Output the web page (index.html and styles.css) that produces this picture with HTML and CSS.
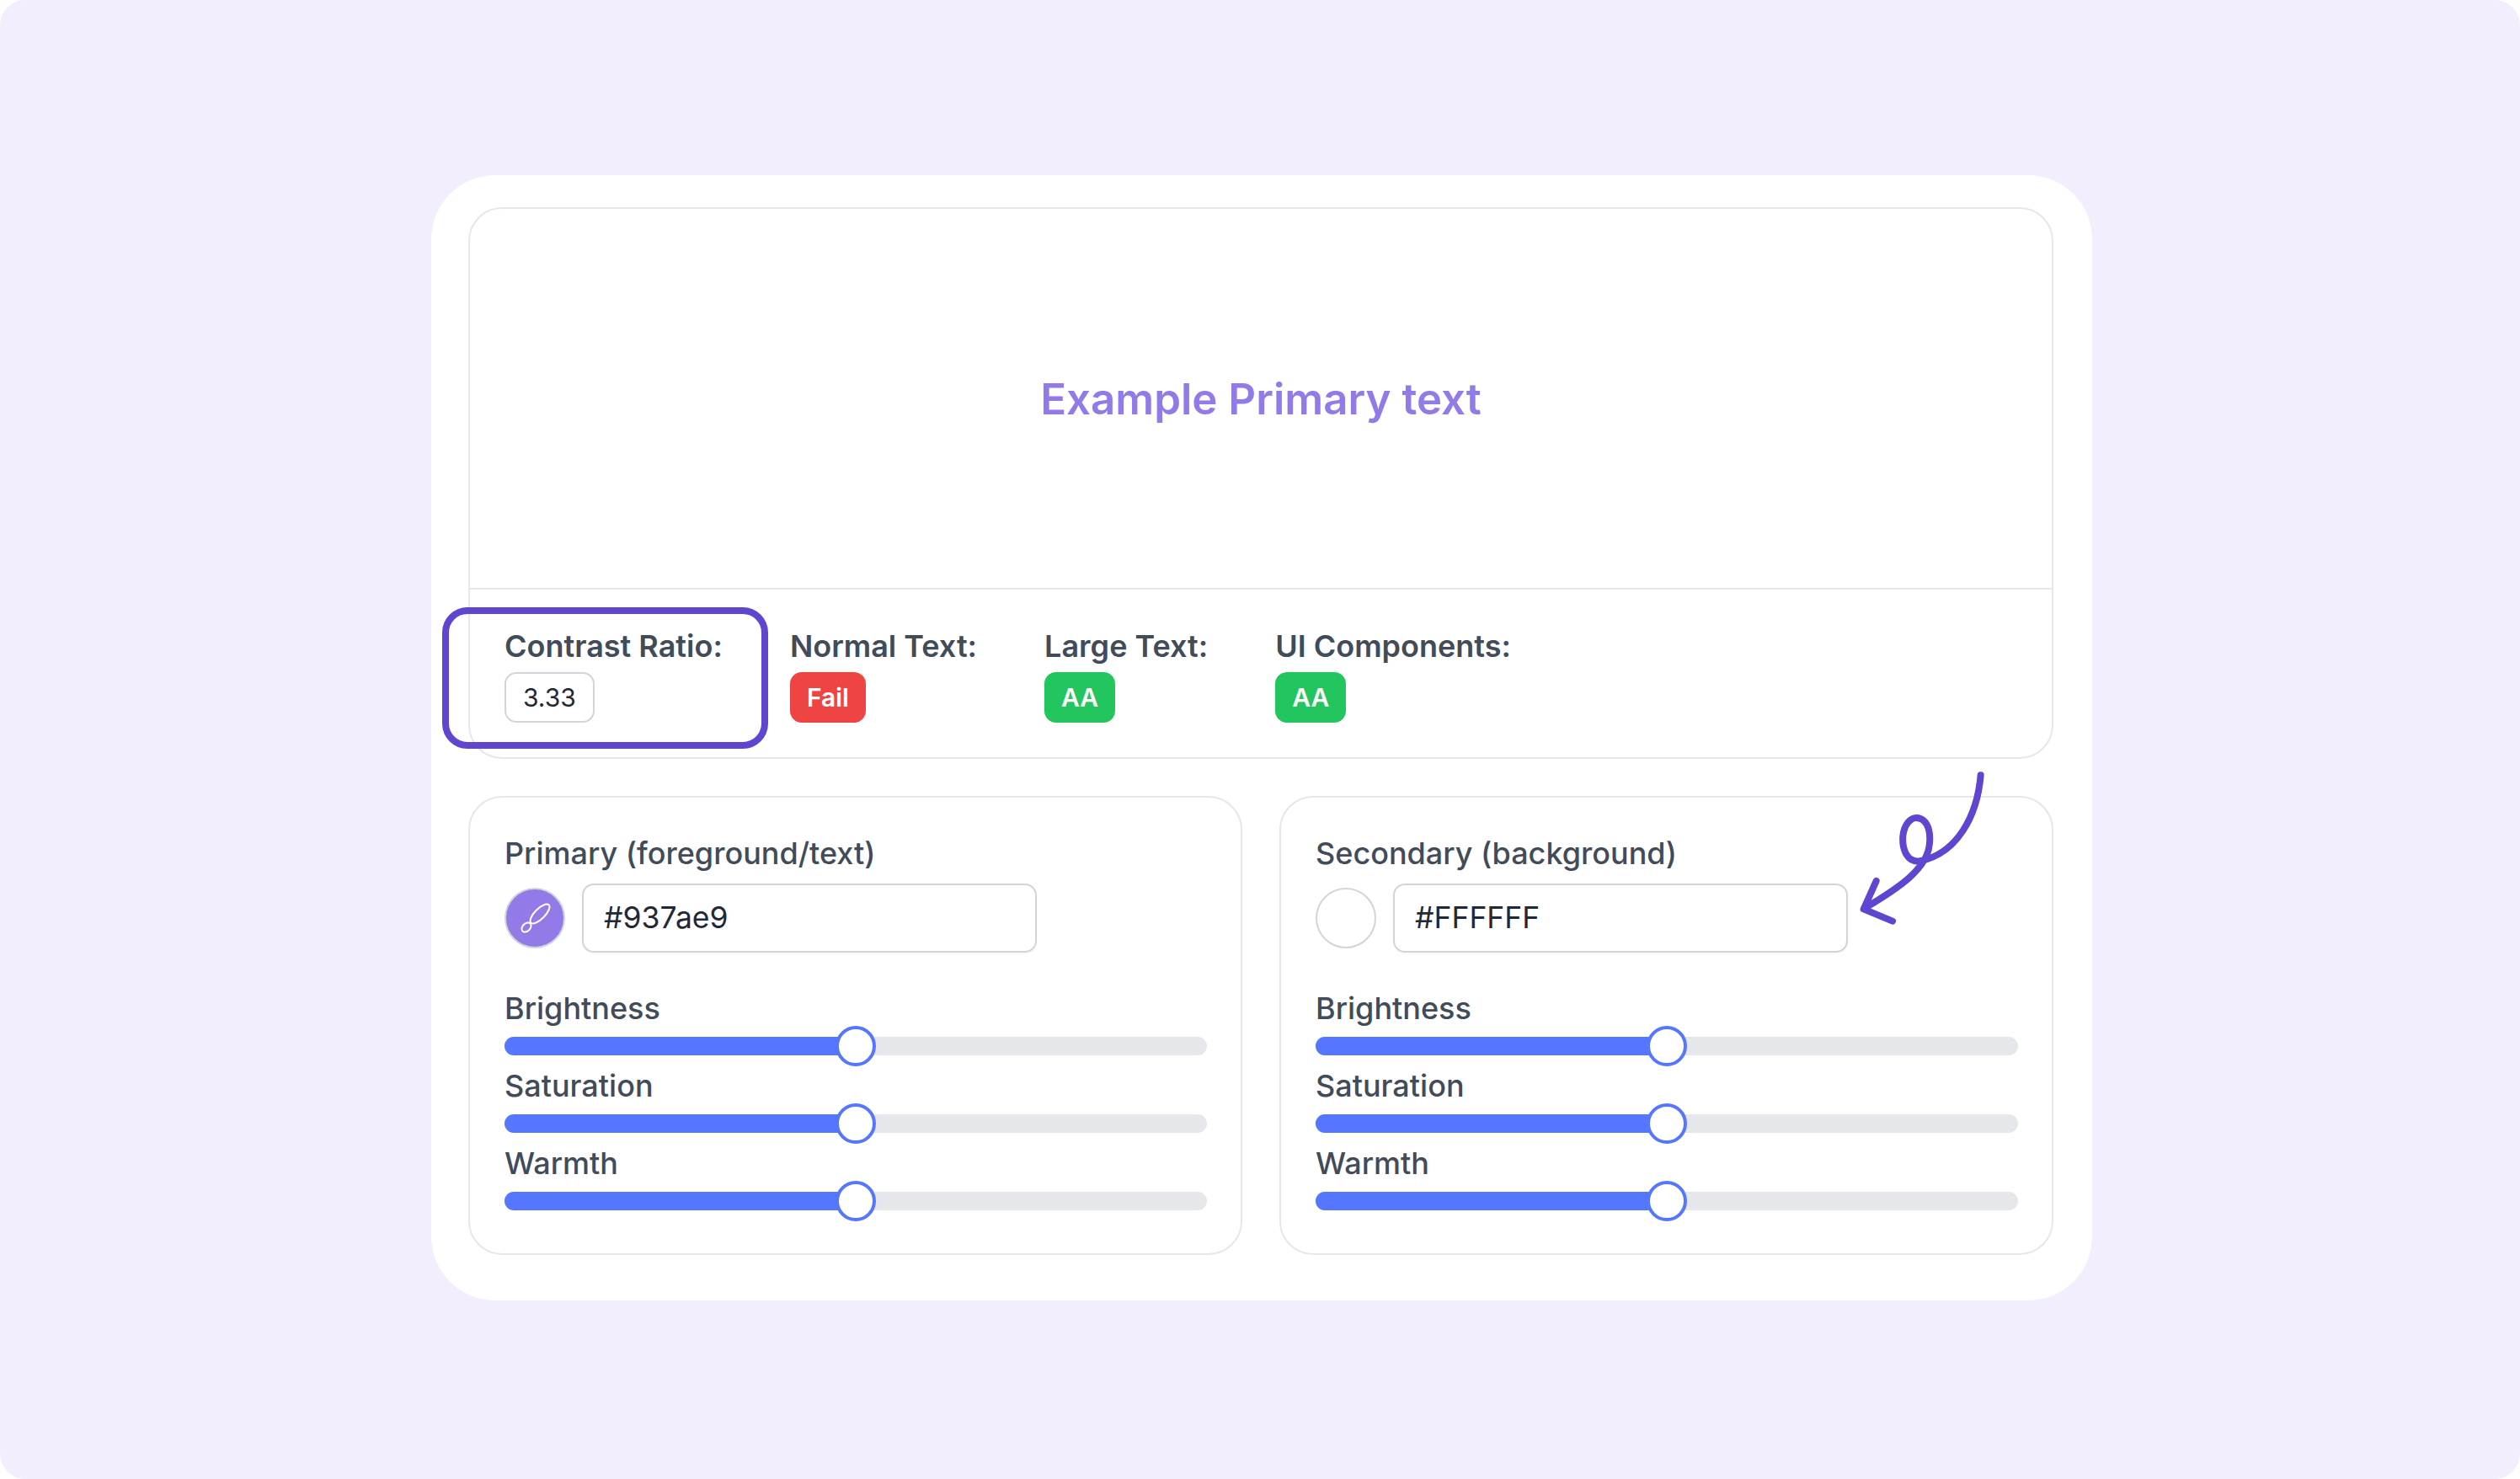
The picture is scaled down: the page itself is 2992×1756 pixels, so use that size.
FILE: index.html
```html
<!DOCTYPE html>
<html lang="en">
<head>
  <meta charset="UTF-8" />
  <title>Color Contrast Checker</title>
  <link rel="stylesheet" href="styles.css">
</head>
<body>

  <div class="card">
    <!-- Preview + results -->
    <section class="preview-box">
      <div class="preview">Example Primary text</div>
      <div class="stats">
        <div class="stat">
          <span class="stat-label">Contrast Ratio:</span>
          <span class="pill pill-ratio">3.33</span>
        </div>
        <div class="stat">
          <span class="stat-label">Normal Text:</span>
          <span class="pill pill-fail">Fail</span>
        </div>
        <div class="stat">
          <span class="stat-label">Large Text:</span>
          <span class="pill pill-pass">AA</span>
        </div>
        <div class="stat">
          <span class="stat-label">UI Components:</span>
          <span class="pill pill-pass">AA</span>
        </div>
      </div>
    </section>

    <!-- Color controls -->
    <section class="panels">
      <div class="panel">
        <div class="panel-title">Primary (foreground/text)</div>
        <div class="color-row">
          <span class="swatch swatch-primary">
            <svg class="brush" viewBox="0 0 40 40" fill="none" stroke="#fff" stroke-width="2">
              <ellipse cx="26" cy="15" rx="15" ry="6" transform="rotate(-45 26 15)"/>
              <ellipse cx="10" cy="31" rx="6.5" ry="4.5" transform="rotate(-45 10 31)"/>
            </svg>
          </span>
          <div class="hex-input">#937ae9</div>
        </div>
        <div class="sliders">
          <div class="slider-group">
            <div class="slider-label">Brightness</div>
            <div class="track"><div class="fill" style="width: 50%"><span class="thumb"></span></div></div>
          </div>
          <div class="slider-group">
            <div class="slider-label">Saturation</div>
            <div class="track"><div class="fill" style="width: 50%"><span class="thumb"></span></div></div>
          </div>
          <div class="slider-group">
            <div class="slider-label">Warmth</div>
            <div class="track"><div class="fill" style="width: 50%"><span class="thumb"></span></div></div>
          </div>
        </div>
      </div>

      <div class="panel">
        <div class="panel-title">Secondary (background)</div>
        <div class="color-row">
          <span class="swatch"></span>
          <div class="hex-input">#FFFFFF</div>
        </div>
        <div class="sliders">
          <div class="slider-group">
            <div class="slider-label">Brightness</div>
            <div class="track"><div class="fill" style="width: 50%"><span class="thumb"></span></div></div>
          </div>
          <div class="slider-group">
            <div class="slider-label">Saturation</div>
            <div class="track"><div class="fill" style="width: 50%"><span class="thumb"></span></div></div>
          </div>
          <div class="slider-group">
            <div class="slider-label">Warmth</div>
            <div class="track"><div class="fill" style="width: 50%"><span class="thumb"></span></div></div>
          </div>
        </div>
      </div>
    </section>

    <!-- Annotations drawn over the card -->
    <div class="highlight"></div>
    <svg class="arrow" viewBox="0 0 1020 750" fill="none" stroke="#5f45cf" stroke-width="24" stroke-linecap="round" stroke-linejoin="round">
      <path d="M692 88 C680 230 610 370 470 395 C425 395 412 345 415 305 C420 260 445 240 462 240 C495 240 515 275 510 330 C505 420 400 490 278 562"/>
      <path d="M320 465 L275 565 L378 608"/>
    </svg>
  </div>

</body>
</html>
```

FILE: styles.css
```css
html {
  background: #fff;
}

body {
  font-family: 'Inter', 'Liberation Sans', sans-serif;
  background: #f2eefe;
  margin: 0;
  box-sizing: border-box;
  height: 100vh;
  padding: 0 0 4px 4px;
  border-radius: 30px;
  display: flex;
  align-items: center;
  justify-content: center;
  color: #414b5a;
}

.card {
  position: relative;
  box-sizing: border-box;
  width: 1972px;
  height: 1336px;
  padding: 38px 46px 54px 44px;
  background: #fff;
  border-radius: 76px;
  display: flex;
  flex-direction: column;
  gap: 44px;
}

.preview-box {
  border: 2px solid #e5e7eb;
  border-radius: 40px;
}

.preview {
  height: 450px;
  display: flex;
  align-items: center;
  justify-content: center;
  border-bottom: 2px solid #e5e7eb;
  color: #937ae9;
  font-size: 51px;
  font-weight: 600;
}

.stats {
  display: flex;
  gap: 80px;
  padding: 41px 41px 41px 41px;
}

.stat {
  display: flex;
  flex-direction: column;
  align-items: flex-start;
  gap: 5px;
}

.stat-label {
  font-size: 36px;
  font-weight: 600;
  line-height: 52px;
}

.pill {
  height: 60px;
  line-height: 60px;
  padding: 0 20px;
  border-radius: 14px;
  font-size: 30px;
  font-weight: 600;
  color: #fff;
}

.pill-ratio {
  height: 56px;
  line-height: 56px;
  border: 2px solid #d1d5db;
  color: #1f2937;
  font-weight: 400;
}

.pill-fail {
  background: #ef4444;
}

.pill-pass {
  background: #22c55e;
}

.panels {
  display: grid;
  grid-template-columns: 1fr 1fr;
  gap: 44px;
}

.panel {
  box-sizing: border-box;
  height: 545px;
  padding: 44px 40px 0 41px;
  border: 2px solid #e5e7eb;
  border-radius: 40px;
}

.panel-title {
  font-size: 36px;
  font-weight: 500;
  line-height: 45px;
}

.color-row {
  display: flex;
  align-items: center;
  gap: 20px;
  margin-top: 13px;
}

.swatch {
  box-sizing: border-box;
  width: 72px;
  height: 72px;
  border-radius: 50%;
  border: 2px solid #d1d5db;
  display: flex;
  align-items: center;
  justify-content: center;
}

.swatch-primary {
  background: #937ae9;
}

.brush {
  width: 40px;
  height: 40px;
}

.hex-input {
  box-sizing: border-box;
  width: 540px;
  height: 82px;
  line-height: 78px;
  padding: 0 24px;
  border: 2px solid #d1d5db;
  border-radius: 14px;
  box-shadow: 0 1px 2px rgba(0,0,0,0.05);
  font-size: 35.5px;
  color: #1f2937;
}

.sliders {
  margin-top: 43px;
  display: flex;
  flex-direction: column;
  gap: 13px;
}

.slider-label {
  font-size: 36px;
  font-weight: 500;
  line-height: 46px;
}

.track {
  height: 22px;
  margin-top: 11px;
  border-radius: 11px;
  background: #e5e7eb;
}

.fill {
  position: relative;
  height: 100%;
  border-radius: 11px;
  background: #5577ff;
}

.thumb {
  position: absolute;
  right: -24px;
  top: -13px;
  box-sizing: border-box;
  width: 48px;
  height: 48px;
  border-radius: 50%;
  border: 4px solid #5577ff;
  background: #fff;
}

.highlight {
  position: absolute;
  left: 13px;
  top: 513px;
  box-sizing: border-box;
  width: 387px;
  height: 168px;
  border: 8px solid #5f45cf;
  border-radius: 30px;
}

.arrow {
  position: absolute;
  left: 1609px;
  top: 683px;
  width: 340px;
  height: 250px;
}
```
